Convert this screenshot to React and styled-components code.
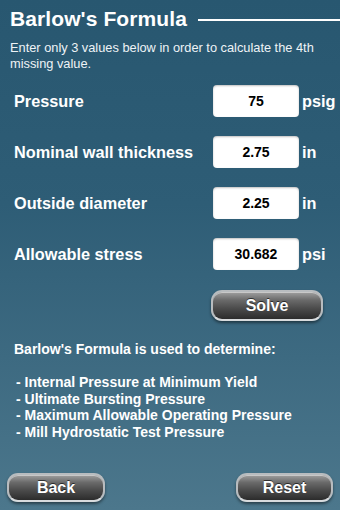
import React from 'react';
import styled, { createGlobalStyle } from 'styled-components';

const GlobalStyle = createGlobalStyle`
  html, body {
    margin: 0;
    padding: 0;
  }
  body {
    font-family: "Liberation Sans", Arial, sans-serif;
  }
`;

const fields = [
  { label: 'Pressure', value: '75', unit: 'psig' },
  { label: 'Nominal wall thickness', value: '2.75', unit: 'in' },
  { label: 'Outside diameter', value: '2.25', unit: 'in' },
  { label: 'Allowable stress', value: '30.682', unit: 'psi' },
];

const uses = [
  'Internal Pressure at Minimum Yield',
  'Ultimate Bursting Pressure',
  'Maximum Allowable Operating Pressure',
  'Mill Hydrostatic Test Pressure',
];

const App = () => {
  return (
    <>
      <GlobalStyle />
      <Screen>
        <Header>
          <Title>Barlow's Formula</Title>
          <Rule />
        </Header>
        <Intro>Enter only 3 values below in order to calculate the 4th missing value.</Intro>

        <Form>
          {fields.map(f => (
            <Row key={f.label}>
              <Label>{f.label}</Label>
              <Field>{f.value}</Field>
              <Unit>{f.unit}</Unit>
            </Row>
          ))}
        </Form>

        <SolveRow>
          <PillBtn width={112} height={31}>Solve</PillBtn>
        </SolveRow>

        <Info>
          <InfoTitle>Barlow's Formula is used to determine:</InfoTitle>
          <List>
            {uses.map(u => (
              <li key={u}>- {u}</li>
            ))}
          </List>
        </Info>

        <Footer>
          <PillBtn width={98} height={29}>Back</PillBtn>
          <PillBtn width={97} height={29}>Reset</PillBtn>
        </Footer>
      </Screen>
    </>
  );
};

const Screen = styled.div`
  width: 340px;
  height: 510px;
  overflow: hidden;
  display: flex;
  flex-direction: column;
  background: linear-gradient(180deg, #285770 0%, #2e5d76 40%, #4c778c 100%);
  color: #fff;
  box-sizing: border-box;
`;

const Header = styled.div`
  display: flex;
  align-items: center;
  padding: 5px 0 0 10px;
  height: 28px;
`;

const Title = styled.h1`
  margin: 0;
  font-size: 21px;
  font-weight: bold;
  white-space: nowrap;
  letter-spacing: 0.1px;
`;

const Rule = styled.div`
  flex: 1;
  height: 2px;
  background: #fff;
  margin-left: 11px;
  margin-top: 1px;
`;

const Intro = styled.p`
  margin: 7px 10px 0 10px;
  font-size: 12.8px;
  line-height: 16px;
  color: #eef3f6;
`;

const Form = styled.div`
  display: flex;
  flex-direction: column;
  gap: 19px;
  margin-top: 13px;
  padding-left: 14px;
`;

const Row = styled.div`
  display: grid;
  grid-template-columns: 199px 86px 1fr;
  align-items: center;
  height: 32px;
`;

const Label = styled.span`
  font-size: 16.3px;
  font-weight: bold;
`;

const Field = styled.div`
  height: 32px;
  background: #fff;
  border-radius: 4px;
  color: #000;
  font-size: 14px;
  font-weight: bold;
  display: flex;
  align-items: center;
  justify-content: center;
  box-shadow: inset 0 1px 2px rgba(0, 0, 0, 0.25);
`;

const Unit = styled.span`
  font-size: 16.3px;
  font-weight: bold;
  padding-left: 3px;
`;

const SolveRow = styled.div`
  display: flex;
  justify-content: flex-end;
  padding-right: 17px;
  margin-top: 20px;
`;

const PillBtn = styled.div`
  width: ${({ width }) => width}px;
  height: ${({ height }) => height}px;
  box-sizing: border-box;
  border-radius: 11px;
  border: 2px solid #b8bcbf;
  border-bottom-color: #d8dbdd;
  background: linear-gradient(180deg, #a0a0a0 0%, #6a6a6a 30%, #4c4c4c 60%, #2c2c2c 100%);
  box-shadow: 0 2px 3px rgba(0, 0, 0, 0.45), inset 0 1px 0 rgba(255, 255, 255, 0.45);
  color: #fff;
  font-size: 16px;
  font-weight: bold;
  text-shadow: 0 -1px 0 rgba(0, 0, 0, 0.6);
  display: flex;
  align-items: center;
  justify-content: center;
`;

const Info = styled.div`
  padding-left: 14px;
  margin-top: 20px;
`;

const InfoTitle = styled.p`
  margin: 0;
  font-size: 14px;
  font-weight: bold;
`;

const List = styled.ul`
  list-style: none;
  margin: 17px 0 0 0;
  padding: 0 0 0 2px;
  font-size: 14px;
  font-weight: bold;
  line-height: 16.7px;
`;

const Footer = styled.div`
  margin-top: auto;
  display: flex;
  justify-content: space-between;
  padding: 0 7px 8px 7px;
`;

export default App;
